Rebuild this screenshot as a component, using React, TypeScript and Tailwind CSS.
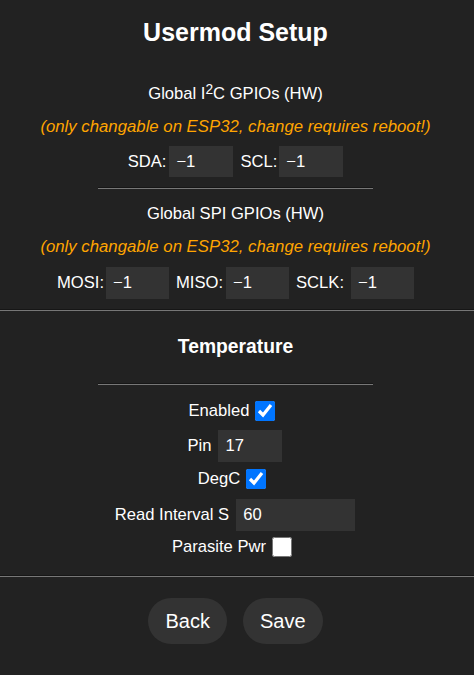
import React from "react";

const inputCls =
  "bg-[#333] text-white border-0 outline-none pl-[7px] text-[16.6px] font-['Liberation_Sans',Arial,sans-serif]";

function Hr({ short }: { short?: boolean }) {
  return (
    <div
      className={`${short ? "w-[275px]" : "w-full"} h-[2px] border-t border-t-[#161616] bg-[#777]`}
    />
  );
}

function Label({ children }: { children: React.ReactNode }) {
  return <span className="leading-[20px]">{children}</span>;
}

function Check({ checked }: { checked: boolean }) {
  return (
    <input
      type="checkbox"
      defaultChecked={checked}
      className="w-[20px] h-[20px] m-0 mr-[7px] accent-[#0075ff]"
    />
  );
}

export default function App() {
  return (
    <div className="min-h-[675px] w-full bg-[#222] text-white font-['Liberation_Sans',Arial,sans-serif] text-[16.6px] flex flex-col items-center pr-[3px]">
      <h2 className="mt-[18px] text-[25px] leading-[28px] font-bold">Usermod Setup</h2>

      <div className="mt-[38px] leading-[20px]">
        Global I
        <span className="text-[0.83em] leading-none relative -top-[0.36em] align-baseline">2</span>
        C GPIOs (HW)
      </div>
      <div className="mt-[13px] leading-[20px] italic text-[#ffa500] text-[16.75px]">
        (only changable on ESP32, change requires reboot!)
      </div>
      <div className="mt-[9px] flex items-center">
        <Label>SDA:</Label>
        <input className={`${inputCls} ml-[3px] w-[64px] h-[31px]`} defaultValue="−1" />
        <span className="ml-[7px] leading-[20px]">SCL:</span>
        <input className={`${inputCls} ml-[2px] w-[64px] h-[31px]`} defaultValue="−1" />
      </div>

      <div className="mt-[10px] w-full flex justify-center">
        <Hr short />
      </div>

      <div className="mt-[15px] leading-[20px]">Global SPI GPIOs (HW)</div>
      <div className="mt-[13px] leading-[20px] italic text-[#ffa500] text-[16.75px]">
        (only changable on ESP32, change requires reboot!)
      </div>
      <div className="mt-[10px] flex items-center">
        <Label>MOSI:</Label>
        <input className={`${inputCls} ml-[2px] w-[63px] h-[32px]`} defaultValue="−1" />
        <span className="ml-[7px] leading-[20px]">MISO:</span>
        <input className={`${inputCls} ml-[3px] w-[63px] h-[32px]`} defaultValue="−1" />
        <span className="ml-[7px] leading-[20px]">SCLK:</span>
        <input className={`${inputCls} ml-[7px] w-[63px] h-[32px]`} defaultValue="−1" />
      </div>

      <div className="mt-[10px] self-stretch -mr-[3px]">
        <Hr />
      </div>

      <h3 className="mt-[24px] text-[19.3px] leading-[24px] font-bold">Temperature</h3>

      <div className="mt-[24px] w-full flex justify-center">
        <Hr short />
      </div>

      <div className="mt-[16px] flex items-center gap-[6px]">
        <Label>Enabled</Label>
        <Check checked />
      </div>
      <div className="mt-[9px] flex items-center gap-[7px] mr-[1px]">
        <Label>Pin</Label>
        <input className={`${inputCls} w-[64px] h-[32px]`} defaultValue="17" />
      </div>
      <div className="mt-[7px] flex items-center gap-[6px]">
        <Label>DegC</Label>
        <Check checked />
      </div>
      <div className="mt-[10px] flex items-center gap-[7px] mr-[1px]">
        <Label>Read Interval S</Label>
        <input className={`${inputCls} w-[119px] h-[32px]`} defaultValue="60" />
      </div>
      <div className="mt-[6px] flex items-center gap-[6px]">
        <Label>Parasite Pwr</Label>
        <Check checked={false} />
      </div>

      <div className="mt-[18px] self-stretch -mr-[3px]">
        <Hr />
      </div>

      <div className="mt-[21px] flex gap-[16px]">
        <button className="h-[46px] px-[17px] rounded-full bg-[#333] text-white text-[20px]">
          Back
        </button>
        <button className="h-[46px] px-[17px] rounded-full bg-[#333] text-white text-[20px]">
          Save
        </button>
      </div>
    </div>
  );
}
